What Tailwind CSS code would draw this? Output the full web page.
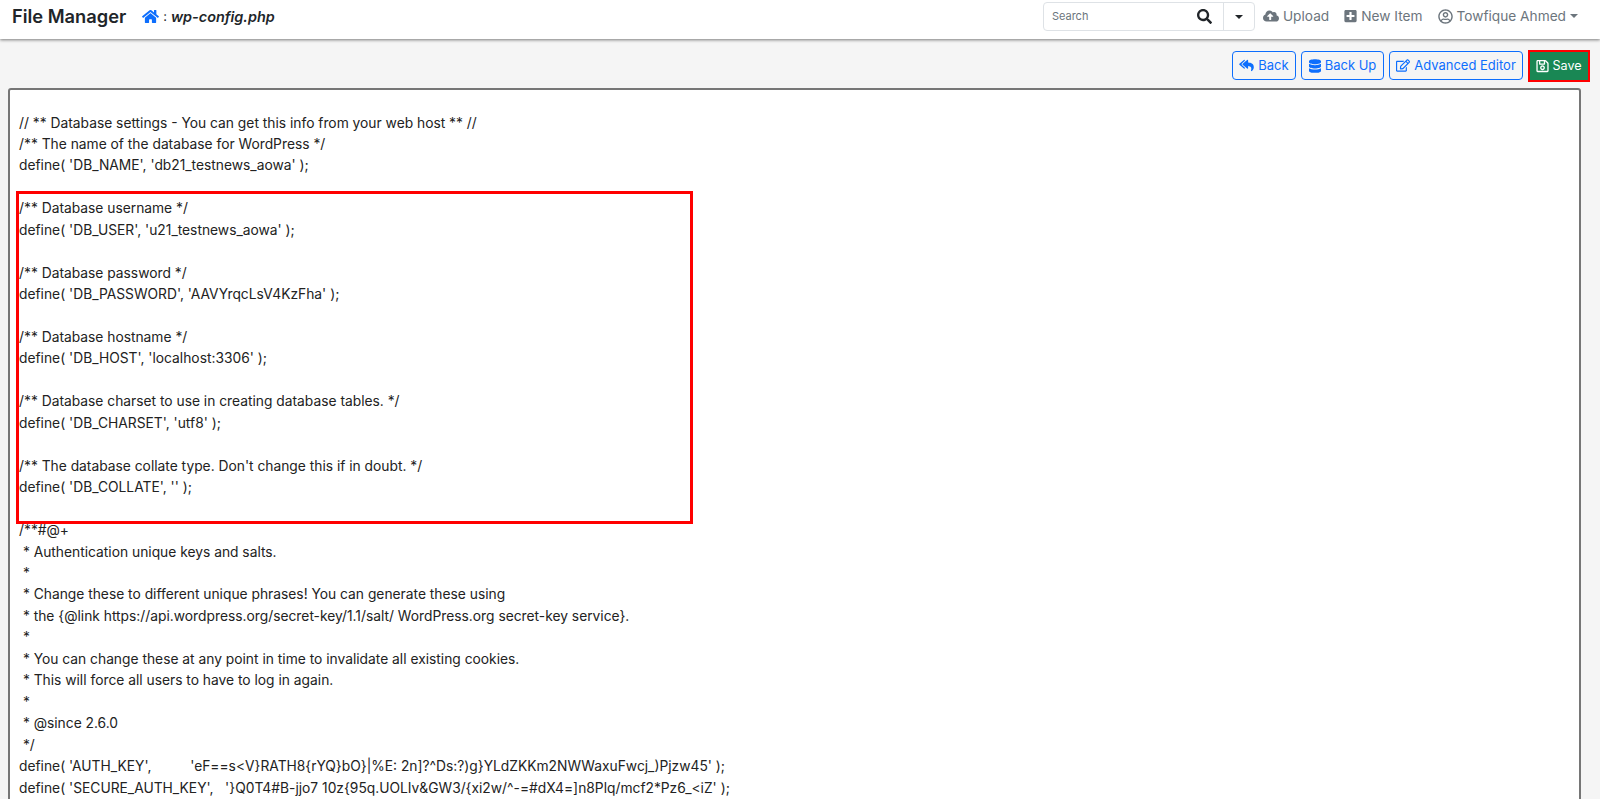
<!DOCTYPE html>
<html lang="en">
<head>
  <meta charset="UTF-8">
  <title>File Manager</title>
  <script src="https://cdn.jsdelivr.net/npm/@tailwindcss/browser@4"></script>
</head>
<body class="h-[799px] overflow-hidden bg-[#f5f5f5] font-['Inter',sans-serif]">
  <!-- Top bar -->
  <header class="h-[39px] pb-[6px] bg-white shadow-[0_1px_3px_rgba(0,0,0,0.5)] flex items-center pl-3 pr-[22px] relative z-10">
    <h1 class="text-[18.3px] font-semibold text-[#212529]">File Manager</h1>
    <svg class="w-[17px] h-[15px] ml-4 fill-[#0d6efd]" viewBox="0 0 576 512"><path d="M280.37 148.26L96 300.11V464a16 16 0 0 0 16 16l112.06-.29a16 16 0 0 0 15.92-16V368a16 16 0 0 1 16-16h64a16 16 0 0 1 16 16v95.64a16 16 0 0 0 16 16.05L464 480a16 16 0 0 0 16-16V300L295.67 148.26a12.19 12.19 0 0 0-15.3 0zM571.6 251.47L488 182.56V44.05a12 12 0 0 0-12-12h-56a12 12 0 0 0-12 12v72.61L318.47 43a48 48 0 0 0-61 0L4.34 251.47a12 12 0 0 0-1.6 16.9l25.5 31A12 12 0 0 0 45.15 301l235.22-193.74a12.19 12.19 0 0 1 15.3 0L530.9 301a12 12 0 0 0 16.9-1.6l25.5-31a12 12 0 0 0-1.7-16.93z"/></svg>
    <span class="text-[13px] ml-1 text-[#212529]">:</span>
    <span class="text-[14.4px] ml-1 font-semibold italic text-[#212529]">wp-config.php</span>

    <div class="ml-auto flex items-center text-[13.7px] text-[#6c757d]">
      <div class="w-[212px] h-[29px] border border-[#dee2e6] rounded-[4px] flex items-center bg-white">
        <span class="flex-1 pl-2 text-[11px] text-[#6c757d]">Search</span>
        <svg class="w-[15px] h-[15px] mr-[11px] fill-[#212529]" viewBox="0 0 512 512"><path d="M505 442.7L405.3 343c-4.5-4.5-10.6-7-17-7H372c27.6-35.3 44-79.7 44-128C416 93.1 322.9 0 208 0S0 93.1 0 208s93.1 208 208 208c48.3 0 92.7-16.4 128-44v16.3c0 6.4 2.5 12.5 7 17l99.7 99.7c9.4 9.4 24.6 9.4 33.9 0l28.3-28.3c9.4-9.4 9.4-24.6.1-34zM208 336c-70.7 0-128-57.2-128-128 0-70.7 57.2-128 128-128 70.7 0 128 57.2 128 128 0 70.7-57.2 128-128 128z"/></svg>
        <span class="w-[31px] h-full border-l border-[#dee2e6] flex items-center justify-center">
          <span class="border-x-[4px] border-x-transparent border-t-[4px] border-t-[#212529]"></span>
        </span>
      </div>
      <span class="flex items-center ml-2">
        <svg class="w-[16px] h-[14px] mr-1 fill-[#6c757d]" viewBox="0 0 640 512"><path d="M537.6 226.6c4.1-10.7 6.4-22.4 6.4-34.6 0-53-43-96-96-96-19.7 0-38.1 6-53.3 16.2C367 64.2 315.3 32 256 32c-88.4 0-160 71.6-160 160 0 2.7.1 5.4.2 8.1C40.2 219.8 0 273.2 0 336c0 79.5 64.5 144 144 144h368c70.7 0 128-57.3 128-128 0-61.9-44-113.6-102.4-125.4zM393.4 288H328v112c0 8.8-7.2 16-16 16h-48c-8.8 0-16-7.2-16-16V288h-65.4c-14.3 0-21.4-17.2-11.3-27.3l105.4-105.4c6.2-6.2 16.4-6.2 22.6 0l105.4 105.4c10.1 10.1 2.9 27.3-11.3 27.3z"/></svg>
        Upload
      </span>
      <span class="flex items-center ml-[15px]">
        <svg class="w-[13px] h-[14px] mr-1 fill-[#6c757d]" viewBox="0 0 448 512"><path d="M400 32H48C21.5 32 0 53.5 0 80v352c0 26.5 21.5 48 48 48h352c26.5 0 48-21.5 48-48V80c0-26.5-21.5-48-48-48zm-32 252c0 6.6-5.4 12-12 12h-92v92c0 6.6-5.4 12-12 12h-56c-6.6 0-12-5.4-12-12v-92H92c-6.6 0-12-5.4-12-12v-56c0-6.6 5.4-12 12-12h92v-92c0-6.6 5.4-12 12-12h56c6.6 0 12 5.4 12 12v92h92c6.6 0 12 5.4 12 12v56z"/></svg>
        New Item
      </span>
      <span class="flex items-center ml-[15px]">
        <svg class="w-[15px] h-[15px] mr-1 fill-[#6c757d]" viewBox="0 0 496 512"><path d="M248 104c-53 0-96 43-96 96s43 96 96 96 96-43 96-96-43-96-96-96zm0 144c-26.5 0-48-21.5-48-48s21.5-48 48-48 48 21.5 48 48-21.5 48-48 48zm0-240C111 8 0 119 0 256s111 248 248 248 248-111 248-248S385 8 248 8zm0 448c-49.7 0-95.1-18.3-130.1-48.4 14.9-23 40.4-38.6 69.6-39.5 20.8 6.4 40.6 9.6 60.5 9.6s39.7-3.1 60.5-9.6c29.2 1 54.7 16.5 69.6 39.5-35 30.1-80.4 48.4-130.1 48.4zm162.7-84.1c-24.4-31.4-62.1-51.9-105.1-51.9-10.2 0-26 9.6-57.6 9.6-31.5 0-47.4-9.6-57.6-9.6-42.9 0-80.6 20.5-105.1 51.9C61.9 339.2 48 299.2 48 256c0-110.3 89.7-200 200-200s200 89.7 200 200c0 43.2-13.9 83.2-37.3 115.9z"/></svg>
        Towfique Ahmed
        <span class="ml-1 border-x-[4px] border-x-transparent border-t-[4px] border-t-[#6c757d]"></span>
      </span>
    </div>
  </header>

  <!-- Actions -->
  <div class="flex justify-end gap-[5px] pt-[12px] pr-[10px] pl-2 h-[49px] text-[13px] text-[#0d6efd]">
    <button class="w-[64px] h-[29px] border border-[#0d6efd] rounded-[4px] flex items-center justify-center gap-1">
      <svg class="w-[15px] h-[13px] fill-[#0d6efd]" viewBox="0 0 576 512"><path d="M136.309 189.836L312.313 37.851C327.72 24.546 352 35.348 352 56.015v82.763c129.182 10.231 224 52.212 224 183.548 0 61.441-39.582 122.309-83.333 154.132-13.653 9.931-33.111-2.533-28.077-18.631 38.512-123.162-3.922-169.482-112.59-182.015v84.175c0 20.701-24.3 31.453-39.687 18.164L136.309 226.164c-11.071-9.561-11.086-26.753 0-36.328zm-128 36.328L184.313 378.15C199.7 391.439 224 380.687 224 359.986v-15.818l-108.606-93.785A55.96 55.96 0 0 1 96 207.998a55.953 55.953 0 0 1 19.393-42.38L224 71.832V56.015c0-20.667-24.28-31.469-39.687-18.164L8.309 189.836c-11.086 9.575-11.071 26.767 0 36.328z"/></svg>
      Back
    </button>
    <button class="w-[83px] h-[29px] border border-[#0d6efd] rounded-[4px] flex items-center justify-center gap-1">
      <svg class="w-[12px] h-[14px] fill-[#0d6efd]" viewBox="0 0 448 512"><path d="M448 73.143v45.714C448 159.143 347.667 192 224 192S0 159.143 0 118.857V73.143C0 32.857 100.333 0 224 0s224 32.857 224 73.143zM448 176v102.857C448 319.143 347.667 352 224 352S0 319.143 0 278.857V176c48.125 33.143 136.208 48.572 224 48.572S399.874 209.143 448 176zm0 160v102.857C448 479.143 347.667 512 224 512S0 479.143 0 438.857V336c48.125 33.143 136.208 48.572 224 48.572S399.874 369.143 448 336z"/></svg>
      Back Up
    </button>
    <button class="w-[134px] h-[29px] border border-[#0d6efd] rounded-[4px] flex items-center justify-center gap-1">
      <svg class="w-[14px] h-[13px] fill-[#0d6efd]" viewBox="0 0 576 512"><path d="M402.3 344.9l32-32c5-5 13.7-1.5 13.7 5.7V464c0 26.5-21.5 48-48 48H48c-26.5 0-48-21.5-48-48V112c0-26.5 21.5-48 48-48h273.5c7.1 0 10.7 8.6 5.7 13.7l-32 32c-1.5 1.5-3.5 2.3-5.7 2.3H48v352h352V350.5c0-2.1.8-4.1 2.3-5.6zm156.6-201.8L296.3 405.7l-90.4 10c-26.2 2.9-48.5-19.2-45.6-45.6l10-90.4L432.9 17.1c22.9-22.9 59.9-22.9 82.7 0l43.2 43.2c22.9 22.9 22.9 60 .1 82.8zM460.1 174L402 115.9 216.2 301.8l-7.3 65.3 65.3-7.3L460.1 174zm64.8-79.7l-43.2-43.2c-4.1-4.1-10.8-4.1-14.8 0L436 82l58.1 58.1 30.9-30.9c4-4.2 4-10.8-.1-14.9z"/></svg>
      Advanced Editor
    </button>
    <button class="w-[62px] h-[32px] -mt-[1px] border-2 border-[#ff0000] bg-[#198754] text-[12.6px] text-white flex items-center justify-center gap-[3px]">
      <svg class="w-[13px] h-[14px] fill-white" viewBox="0 0 448 512"><path d="M433.941 129.941l-83.882-83.882A48 48 0 0 0 316.118 32H48C21.49 32 0 53.49 0 80v352c0 26.51 21.49 48 48 48h352c26.51 0 48-21.49 48-48V163.882a48 48 0 0 0-14.059-33.941zM272 80v80H144V80h128zm122 352H54a6 6 0 0 1-6-6V86a6 6 0 0 1 6-6h42v104c0 13.255 10.745 24 24 24h176c13.255 0 24-10.745 24-24V83.882l78.243 78.243a6 6 0 0 1 1.757 4.243V426a6 6 0 0 1-6 6zM224 232c-48.523 0-88 39.477-88 88s39.477 88 88 88 88-39.477 88-88-39.477-88-88-88zm0 128c-22.056 0-40-17.944-40-40s17.944-40 40-40 40 17.944 40 40-17.944 40-40 40z"/></svg>
      Save
    </button>
  </div>

  <!-- Editor -->
  <div class="relative mx-2 mr-[19px] h-[800px] bg-white border-2 border-[#767676] rounded-[3px] pt-[22.5px] pl-[9px]">
    <div class="whitespace-pre text-[13.8px] leading-[21.45px] text-[#222]">// ** Database settings - You can get this info from your web host ** //
/** The name of the database for WordPress */
define( 'DB_NAME', 'db21_testnews_aowa' );

/** Database username */
define( 'DB_USER', 'u21_testnews_aowa' );

/** Database password */
define( 'DB_PASSWORD', 'AAVYrqcLsV4KzFha' );

/** Database hostname */
define( 'DB_HOST', 'localhost:3306' );

/** Database charset to use in creating database tables. */
define( 'DB_CHARSET', 'utf8' );

/** The database collate type. Don't change this if in doubt. */
define( 'DB_COLLATE', '' );

/**#@+
 * Authentication unique keys and salts.
 *
 * Change these to different unique phrases! You can generate these using
 * the {@link https://api.wordpress.org/secret-key/1.1/salt/ WordPress.org secret-key service}.
 *
 * You can change these at any point in time to invalidate all existing cookies.
 * This will force all users to have to log in again.
 *
 * @since 2.6.0
 */
define( 'AUTH_KEY',          'eF==s&lt;V}RATH8{rYQ}bO}|%E: 2n]?^Ds:?)g}YLdZKKm2NWWaxuFwcj_)Pjzw45' );
define( 'SECURE_AUTH_KEY',   '}Q0T4#B-jjo7 10z{95q.UOLIv&amp;GW3/{xi2w/^-=#dX4=]n8Plq/mcf2*Pz6_&lt;iZ' );</div>
    <!-- red highlight -->
    <div class="absolute left-[6px] top-[101px] w-[677px] h-[333px] border-[3px] border-[#ff0000]"></div>
  </div>
</body>
</html>
